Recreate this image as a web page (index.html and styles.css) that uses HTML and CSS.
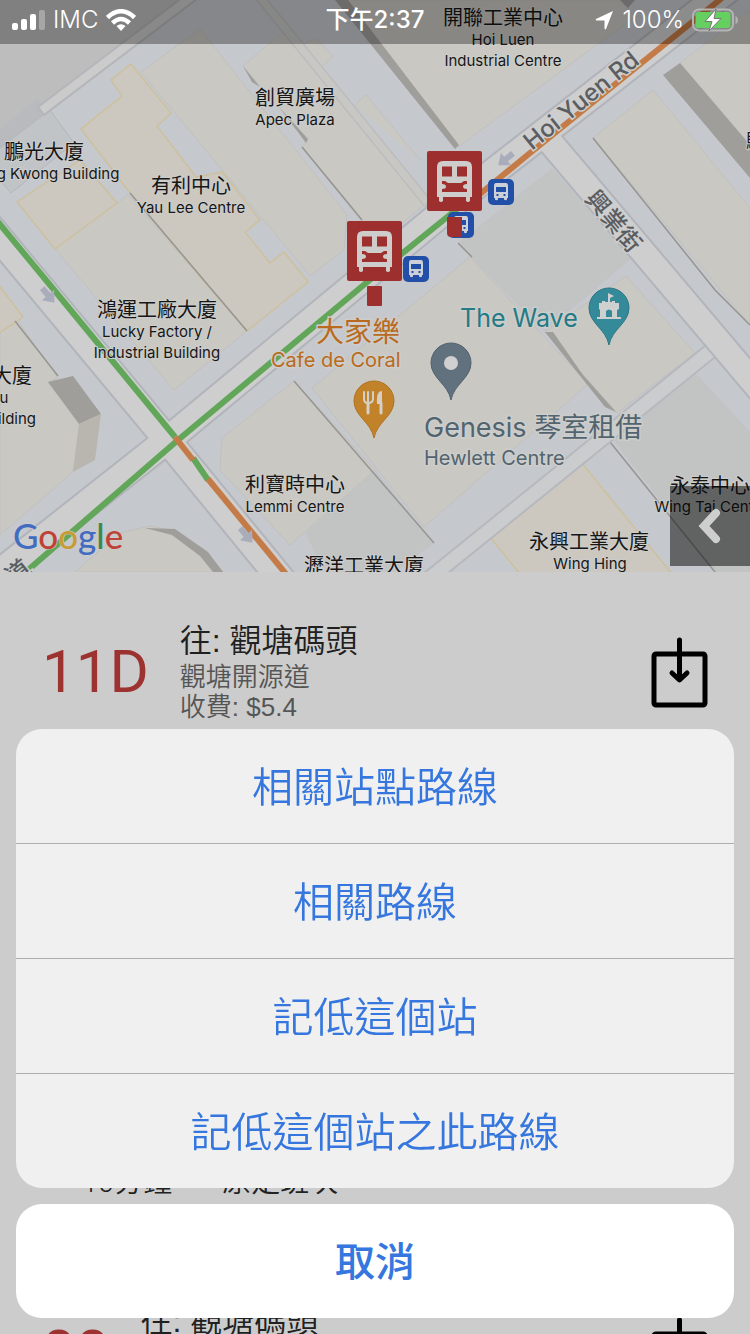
FILE: index.html
```html
<!DOCTYPE html>
<html lang="zh-Hant">
<head>
<meta charset="utf-8">
<meta name="viewport" content="width=device-width, initial-scale=1">
<title>11D 觀塘碼頭</title>
<link rel="stylesheet" href="styles.css">
</head>
<body>
<svg width="0" height="0" class="defs" aria-hidden="true">
  <defs>
    <g id="bus-marker">
      <rect width="55" height="60" rx="2" fill="#9d302e"/>
      <path fill="#cfcdcb" fill-rule="evenodd" d="M16 10H39Q45 10 45 16V46H43V50Q41 52 39 50V46H16V50Q14 52 12 50V46H10V16Q10 10 16 10ZM15 15.500V25.500H25V15.500ZM30 15.500V25.500H40V15.500ZM15 30V33Q19 33 19 35.500T15 38V41H40V38Q36 38 36 35.500T40 33V30H37L34 32H21L18 30Z"/>
    </g>
    <g id="bus-stop">
      <rect width="26" height="26" rx="5" fill="#2250a8"/>
      <path fill="#cdd0d6" fill-rule="evenodd" d="M8 4H18Q20 4 20 7V19H19V20.500Q17.500 22 16 20.500V19H10V20.500Q8.500 22 7 20.500V19H6V7Q6 4 8 4ZM8 8V13H18V8ZM8.500 15V17H10.500V15ZM15.500 15V17H17.500V15Z"/>
    </g>
    <path id="pin" d="M0 0C-3-16-20-22-20-37A20 20 0 0 1 20-37C20-22 3-16 0 0Z"/>
    <path id="way-arrow" fill="#a9adbb" d="M-9-3H0V-8L10 0 0 8V3H-9Z"/>
    <g id="save-icon" fill="none" stroke="#000" stroke-width="5" stroke-linejoin="round" stroke-linecap="round">
      <rect x="3" y="17" width="51" height="51" rx="2"/>
      <path d="M28.500 3V41M21 36L28.500 43 36 36"/>
    </g>
  </defs>
</svg>

<main class="page">
  <section class="map-panel">
    <svg class="map" viewBox="0 0 750 572" role="img" aria-label="地圖">
      <rect width="750" height="572" fill="#c5c8cc"/>
      <!-- blocks -->
      <path fill="#bdbdbd" d="M0 0H190L50 108 38 98 0 128Z"/>
      <path fill="#b8babd" d="M0 128L38 98 50 110 0 148Z"/>
      <path fill="#c1c4c7" stroke="#b4b6bb" d="M0 148L50 110 74 143 11 193 0 180"/>
      <g fill="#c2c4c4">
        <path d="M458 243L552 168 632 258 545 332 470 257Z"/>
        <path d="M612 438L690 367 750 432V572H715Z"/>
        <path d="M375 470L434 543 395 572H325L305 533Z"/>
      </g>
      <!-- buildings -->
      <g fill="#cac8c3" stroke="#c1c0be" stroke-width="1">
        <path d="M141 72L200 29 347 215 344 250 310 276Z"/>
        <path d="M243 66L285 30 430 200 400 225 362 222 302 147 308 141Z"/>
        <path d="M300 46L316 38 333 57 323 66M355 105L366 95 420 160"/>
        <path d="M345 0L458 147 635 17 620 0Z"/>
        <path d="M55 249L128 195 247 331 174 390Z"/>
        <path d="M0 332L17 320 58 378 48 382 80 422 73 472 0 535Z"/>
        <path d="M294 381L375 470 290 545 220 470 222 438Z"/>
        <path d="M312 388L470 257 588 384 424 527Z"/>
        <path d="M545 332L626 276 695 353 617 413Z"/>
        <path d="M593 138L653 90 750 208V325Z"/>
        <path d="M680 63L750 10V145Z"/>
        <path d="M75 572L120 533 150 526 175 531 208 553 223 572Z"/>
      </g>
      <g fill="#ccc8c0" stroke="#cdc09c" stroke-width="1.500">
        <path d="M131 64L171 113 157 126 196 177 222 172 260 220 245 232 270 263 284 252 308 282 247 331 207 285 130 193 81 129 122 96 111 80Z"/>
        <path d="M17 202L80 160 117 203 55 249Z"/>
        <path d="M-2 284L23 317 -2 334Z"/>
        <path d="M486 532L577 457 672 574H520Z"/>
      </g>
      <g fill="#a09e9b">
        <path d="M335 0H348L459 145 455 149Z"/>
        <path d="M663 75L680 63 750 145V178Z"/>
        <path d="M48 382L73 376 101 414 79 424Z"/>
        <path d="M545 332L553 332 583 375 616 412 605 407Z"/>
        <path d="M145 528L175 529 208 552 223 572H213L200 556 172 535Z"/>
        <path d="M243 66L251 76 260 87 252 82ZM280 108L308 139 306 143Z"/>
        <path d="M620 0H635L628 8Z"/>
      </g>
      <path fill="#b9b6b0" d="M79 424L101 414 95 460 73 472Z"/>
      <g fill="none" stroke="#979592" stroke-width="1.500">
        <path d="M130 193L247 331M302 147L362 220M294 381L434 543M593 138L715 290 750 325M610 442L715 572M15 321L58 376M458 243L472 257"/>
      </g>
      <!-- minor roads -->
      <g fill="none" stroke-linecap="square">
        <path stroke="#b5b6ba" stroke-width="12" d="M45 108L190 -2"/>
        <path stroke="#cbcbcb" stroke-width="8" d="M45 108L190 -2"/>
        <path stroke="#bbbcbe" stroke-width="10" d="M258 -5L425 200"/>
        <path stroke="#c8c7c4" stroke-width="7" d="M258 -5L425 200"/>
        <path stroke="#b6b8be" stroke-width="17" d="M712 350L425 582"/>
        <path stroke="#cbcccd" stroke-width="13" d="M712 350L425 582"/>
      </g>
      <!-- main roads -->
      <g fill="none" stroke="#b2b4bc">
        <path stroke-width="30" d="M-20 588L170 438 460 198 740 -20"/>
        <path stroke-width="30" d="M-20 215L168 441 290 590"/>
        <path stroke-width="28" d="M540 130L770 402"/>
      </g>
      <g fill="none" stroke="#cecece">
        <path stroke-width="26" d="M-20 588L170 438 460 198 740 -20"/>
        <path stroke-width="26" d="M-20 215L168 441 290 590"/>
        <path stroke-width="24" d="M540 130L770 402"/>
      </g>
      <!-- traffic -->
      <g fill="none" stroke-width="6">
        <path stroke="#62a65a" d="M-2 222L50 285 175 437M193 458L208 480M28 570L178 440 378 273 462 205"/>
        <path stroke="#c47b47" d="M175 437L193 460M208 479L286 574M480 194L530 153 722 -2"/>
      </g>
      <use href="#way-arrow" transform="translate(48 295) rotate(50)"/>
      <use href="#way-arrow" transform="translate(246 535) rotate(50)"/>
      <use href="#way-arrow" transform="translate(506 159) rotate(141)"/>

      <!-- place labels -->
      <g class="place">
        <text class="zh" x="503" y="25">開聯工業中心</text><text x="503" y="45">Hoi Luen</text><text x="503" y="66">Industrial Centre</text>
        <text class="zh" x="295" y="105">創貿廣場</text><text x="295" y="125">Apec Plaza</text>
        <text class="zh" x="44" y="159">鵬光大廈</text><text x="58" y="179">g Kwong Building</text>
        <text class="zh" x="191" y="193">有利中心</text><text x="191" y="213">Yau Lee Centre</text>
        <text class="zh" x="157" y="317">鴻運工廠大廈</text><text x="157" y="337">Lucky Factory /</text><text x="157" y="358">Industrial Building</text>
        <text class="zh" x="12" y="383">大廈</text><text x="4" y="403">u</text><text x="17" y="424">ilding</text>
        <text class="zh" x="295" y="492">利寶時中心</text><text x="295" y="512">Lemmi Centre</text>
        <text class="zh" x="364" y="573">瀝洋工業大廈</text>
        <text class="zh" x="589" y="549">永興工業大廈</text><text x="590" y="569">Wing Hing</text>
        <text class="zh" x="710" y="493">永泰中心</text><text x="711" y="512">Wing Tai Centre</text>
        <text class="zh" x="756" y="149">駿</text>
      </g>
      <text class="road" transform="translate(532 151) rotate(-39)">Hoi Yuen Rd</text>
      <text class="road" transform="translate(584 199) rotate(50)">興業街</text>
      <text class="road" transform="translate(14 586) rotate(-39)">道</text>
      <g class="poi">
        <text class="food" x="316" y="342" font-size="28">大家樂</text>
        <text class="food" x="271" y="367" font-size="20">Cafe de Coral</text>
        <text class="wave" x="460" y="327" font-size="25">The Wave</text>
        <text class="grey" x="424" y="437" font-size="27">Genesis 琴室租借</text>
        <text class="grey" x="424" y="465" font-size="20">Hewlett Centre</text>
      </g>

      <!-- pins -->
      <use href="#pin" transform="translate(609 345)" fill="#358a9a" stroke="#2c7686"/>
      <path fill="#cfd0d0" d="M608 293L614 296 610 298V302H612V301H615V303H619V309L617 310V317H621V319H597V317H600V310L599 309V303H602V301H605V302H608ZM606 317H612V311Q609 308 606 311Z" fill-rule="evenodd"/>
      <use href="#pin" transform="translate(451 400)" fill="#61717e" stroke="#53616d"/>
      <circle cx="451" cy="363" r="7" fill="#d0d0d0"/>
      <use href="#pin" transform="translate(374 438)" fill="#c28229" stroke="#ad7321"/>
      <path fill="none" stroke="#d4cfc7" stroke-width="2" stroke-linecap="round" d="M364 392V399Q364 403 368 403 373 403 373 399V392M368 392V402"/>
      <path stroke="#d4cfc7" stroke-width="3" stroke-linecap="round" d="M368 403V413M381 403V413"/>
      <path fill="#d4cfc7" d="M382 391Q376 391 377 404H382Z"/>

      <!-- stops -->
      <use href="#bus-stop" x="448" y="212"/>
      <path fill="#9d302e" d="M447 217H462V237H451Q447 237 447 233Z"/>
      <use href="#bus-stop" x="488" y="179"/>
      <use href="#bus-stop" x="403" y="256"/>
      <rect x="367" y="286" width="15" height="20" rx="1" fill="#9d302e"/>
      <use href="#bus-marker" x="427" y="151"/>
      <use href="#bus-marker" x="347" y="221"/>

      <text class="google" x="13" y="549"><tspan fill="#426cc0">G</tspan><tspan fill="#bf4238">o</tspan><tspan fill="#c79c35">o</tspan><tspan fill="#426cc0">g</tspan><tspan fill="#3b8a4d">l</tspan><tspan fill="#bf4238">e</tspan></text>
    </svg>

    <header class="status">
      <div class="status-side">
        <svg width="33" height="20" viewBox="0 0 33 20" fill="#fff" aria-hidden="true"><rect y="13" width="6" height="7" rx="2"/><rect x="9" y="9" width="6" height="11" rx="2"/><rect x="18" y="4" width="6" height="16" rx="2"/><rect x="27" width="6" height="20" rx="2" opacity=".3"/></svg>
        <span>IMC</span>
        <svg width="30" height="23" viewBox="0 0 30 23" aria-hidden="true"><g fill="none" stroke="#fff" stroke-width="4.500"><path d="M1.500 8.500Q15-4 28.500 8.500M6.500 14Q15 6 23.500 14"/></g><path fill="#fff" d="M10.500 17Q15 13.500 19.500 17L15 22Z"/></svg>
      </div>
      <time class="clock">下午2:37</time>
      <div class="status-side status-end">
        <svg width="19" height="19" viewBox="0 0 19 19" aria-hidden="true"><path fill="#fff" d="M18 0L11 18Q10 19 9.500 17.500V9.500H1.500Q0 9 1 8Z"/></svg>
        <span>100%</span>
        <svg width="46" height="24" viewBox="0 0 46 24" aria-hidden="true"><rect x="1" y="1.500" width="40" height="21" rx="6" fill="none" stroke="#b4b4b4" stroke-width="2"/><rect x="3.500" y="4" width="35" height="16" rx="3" fill="#65d05f"/><path fill="#b4b4b4" d="M43.500 8Q46 9 46 12T43.500 16Z"/><path fill="#fff" stroke="#777" stroke-width="1" d="M24 1L13 13.500H20L17 23 29 10.500H22Z"/></svg>
      </div>
    </header>

    <button class="back" type="button" aria-label="返回"><svg width="24" height="36" viewBox="0 0 24 36" aria-hidden="true"><path fill="none" stroke="#cecece" stroke-width="8" stroke-linecap="round" stroke-linejoin="miter" d="M18 5L6 18 18 31"/></svg></button>
  </section>

  <section class="routes">
    <article class="route">
      <div class="route-head">
        <span class="number">11D</span>
        <div class="detail"><h2>往: 觀塘碼頭</h2><p>觀塘開源道</p><p>收費: $5.4</p></div>
        <button class="save" type="button" aria-label="儲存"><svg width="57" height="71" viewBox="0 0 57 71" aria-hidden="true"><use href="#save-icon"/></svg></button>
      </div>
      <p class="arrival"><span>10分鐘</span><span>原定班次</span></p>
    </article>
    <article class="route">
      <div class="route-head">
        <span class="number">88</span>
        <div class="detail"><h2>往: 觀塘碼頭</h2></div>
        <button class="save" type="button" aria-label="儲存"><svg width="57" height="71" viewBox="0 0 57 71" aria-hidden="true"><use href="#save-icon"/></svg></button>
      </div>
    </article>
  </section>
</main>

<div class="sheet" role="dialog" aria-label="選項">
  <div class="options">
    <button type="button">相關站點路線</button>
    <button type="button">相關路線</button>
    <button type="button">記低這個站</button>
    <button type="button">記低這個站之此路線</button>
  </div>
  <button class="cancel" type="button">取消</button>
</div>
</body>
</html>
```

FILE: styles.css
```css
* { box-sizing: border-box; }

body {
  margin: 0;
  background: #ccc;
  color: #222;
  font-family: "Liberation Sans", "Noto Sans CJK TC", sans-serif;
}

button {
  border: 0;
  padding: 0;
  background: none;
  font: inherit;
  cursor: pointer;
}

h2, p { margin: 0; font-weight: 350; }

.defs { position: absolute; }

.page { height: 100vh; overflow: hidden; }

.map-panel { position: relative; }
.map { display: block; width: 100%; height: auto; }

.map text { font-family: Inter, "Noto Sans CJK TC", sans-serif; }
.place text {
  font-size: 15px;
  fill: #161616;
  text-anchor: middle;
  stroke: #cdcdcb;
  stroke-width: 2px;
  paint-order: stroke;
}
.place .zh { font-size: 20px; }
.road {
  font-size: 24px;
  font-weight: 500;
  fill: #5a5d61;
  stroke: #cecece;
  stroke-width: 3px;
  paint-order: stroke;
}
.poi text { stroke: #cdcdcb; stroke-width: 3px; paint-order: stroke; }
.food { fill: #b96a20; }
.wave { fill: #247a85; }
.grey { fill: #52646f; }
.map .google {
  font-family: Lato, sans-serif;
  font-size: 35px;
  font-weight: 500;
  stroke: #d0d0d0;
  stroke-width: 1px;
  paint-order: stroke;
}

.status {
  position: absolute;
  inset: 0 0 auto;
  height: 44px;
  padding: 0 12px 4px;
  display: grid;
  grid-template-columns: 1fr auto 1fr;
  align-items: center;
  background: rgba(0, 0, 0, .32);
  color: #fff;
  font: 24px/40px Inter, "Noto Sans CJK TC", sans-serif;
}
.status-side { display: flex; align-items: center; gap: 8px; font-weight: 300; }
.clock { font-weight: 500; }
.status-end { justify-content: flex-end; }

.back {
  position: absolute;
  right: 0;
  bottom: 6px;
  width: 80px;
  height: 80px;
  display: grid;
  place-items: center;
  background: rgba(0, 0, 0, .5);
}

.route { height: 680px; padding: 48px 42px 0; }
.route-head { display: flex; gap: 31px; }
.number {
  padding-top: 18px;
  font-family: Roboto, sans-serif;
  font-size: 60px;
  line-height: 68px;
  color: #9d3331;
}
.detail { flex: 1; }
.detail h2 { font-size: 32px; line-height: 42px; color: #202020; }
.detail p { font-size: 26px; line-height: 30px; color: #555; }
.save { align-self: flex-start; padding-top: 17px; }
.save svg { display: block; }
.arrival {
  padding: 440px 0 0 40px;
  display: flex;
  gap: 50px;
  font-family: Roboto, "Noto Sans CJK TC", sans-serif;
  font-size: 29px;
  line-height: 40px;
}

.sheet {
  position: fixed;
  inset: auto 0 0;
  padding: 16px;
  display: grid;
  gap: 16px;
  font-family: "Noto Sans CJK TC", sans-serif;
  font-size: 40px;
}
.options {
  overflow: hidden;
  border-radius: 26px;
  background: #f0f0f0;
}
.options button, .cancel {
  display: block;
  width: 100%;
  height: 114px;
  padding-bottom: 4px;
  line-height: 60px;
  color: #3577de;
}
.options button { font-size: 41px; font-weight: 350; }
.options button + button { height: 115px; border-top: 1px solid #aeaeb0; }
.cancel { border-radius: 26px; background: #fff; font-weight: 500; }
```
